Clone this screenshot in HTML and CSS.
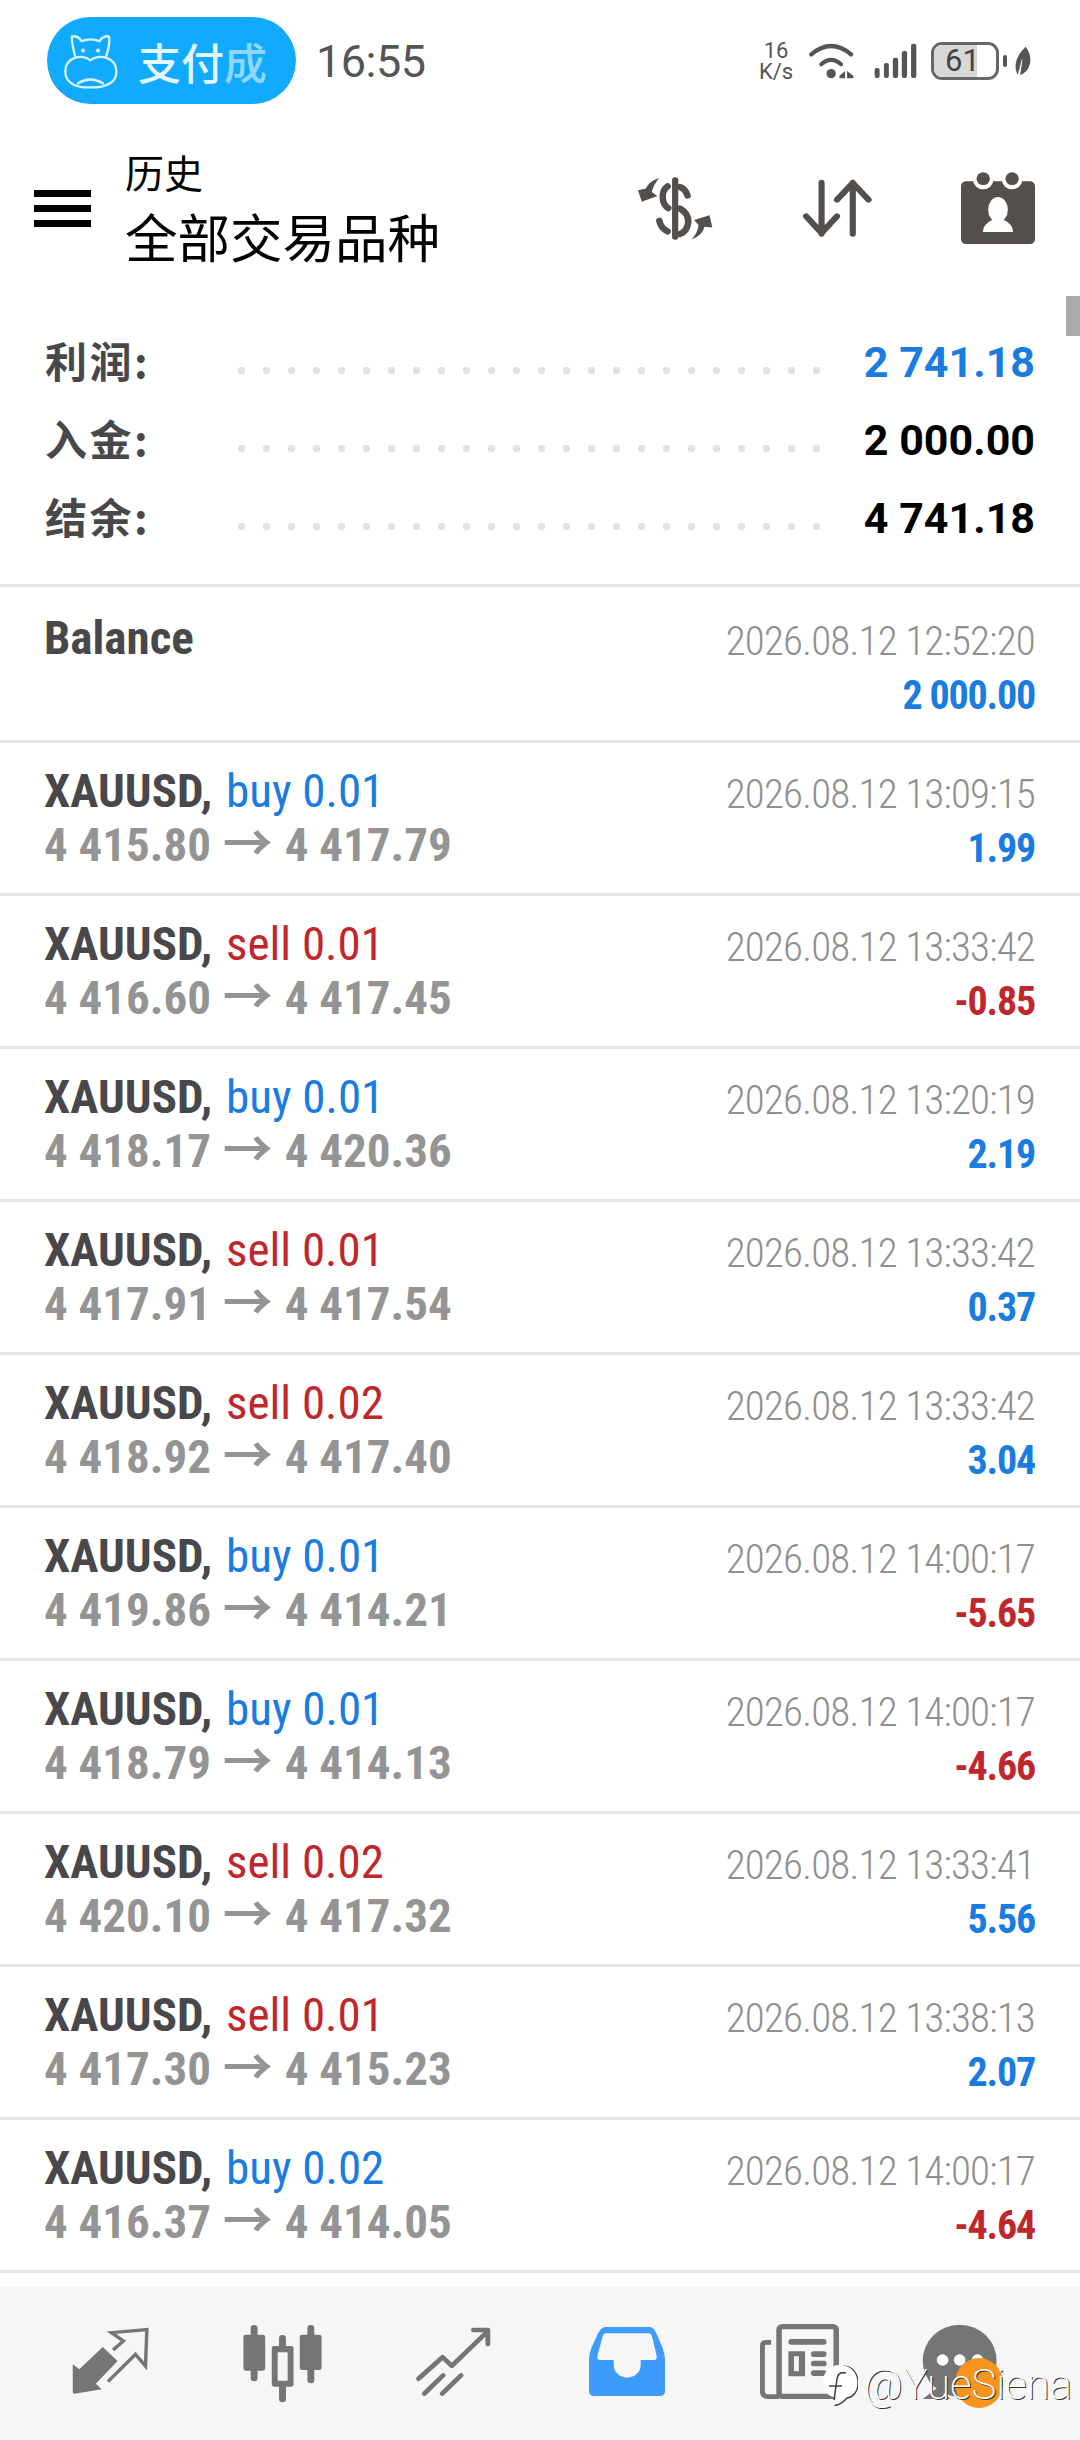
FILE: index.html
```html
<!DOCTYPE html>
<html>
  <head>
    <title>历史</title>
    <meta name="viewport" content="width=device-width, initial-scale=1.0">
    <link rel="stylesheet" href="styles.css">
  </head>
  <body>
    <div class="screen">
      <div class="status-bar">
        <div class="pill">
          <svg class="pill-icon" viewBox="180 98 165 167" preserveAspectRatio="none">
            <g fill="none" stroke="#d8f3ff" stroke-width="7" stroke-linejoin="round" stroke-linecap="round">
              <path d="M216 166Q205 125 207 108Q225 106 236 122Q262 112 290 122Q300 106 318 108Q322 130 310 166"/>
              <path d="M262 180C240 158 185 170 187 215C188 250 225 262 262 260C300 262 340 250 340 215C342 170 285 158 262 180Z"/>
              <path d="M225 248Q262 225 300 248"/>
            </g>
            <circle cx="240" cy="150" r="6" fill="#d8f3ff"/>
            <circle cx="285" cy="150" r="6" fill="#d8f3ff"/>
          </svg>
          <span class="pill-text">支付<span class="pill-fade">成</span></span>
        </div>
        <span class="clock">16:55</span>
        <div class="status-icons">
          <div class="speed"><span>16</span><span>K/s</span></div>
          <svg class="wifi" viewBox="778 128 136 108" preserveAspectRatio="none">
            <g fill="none" stroke="#555" stroke-linecap="round">
              <path d="M785 162Q845 112 905 162" stroke-width="13"/>
              <path d="M815 192Q845 165 875 192" stroke-width="12"/>
            </g>
            <circle cx="845" cy="220" r="14" fill="#555"/>
            <path d="M870 226L887 212V234H870ZM893 212L912 226V234H893Z" fill="#555"/>
          </svg>
          <svg class="signal" viewBox="968 128 130 108" preserveAspectRatio="none">
            <g fill="#555">
              <rect x="970" y="203" width="15" height="30" rx="6"/>
              <rect x="998" y="188" width="15" height="45" rx="6"/>
              <rect x="1025" y="172" width="16" height="61" rx="6"/>
              <rect x="1052" y="152" width="16" height="81" rx="6"/>
              <rect x="1080" y="130" width="16" height="103" rx="6"/>
            </g>
          </svg>
          <div class="battery"><span class="battery-fill"></span><span class="battery-num">61</span></div>
          <span class="battery-tip"></span>
          <svg class="leaf" viewBox="1370 135 60 90" preserveAspectRatio="none">
            <path d="M1410 137C1385 160 1368 190 1385 222C1392 200 1395 180 1400 170C1398 190 1396 205 1392 222C1420 215 1440 175 1410 137Z" fill="#555"/>
          </svg>
        </div>
      </div>

      <div class="header">
        <div class="burger"><span></span><span></span><span></span></div>
        <div class="titles">
          <div class="title-small">历史</div>
          <div class="title-big">全部交易品种</div>
        </div>
        <div class="actions">
          <svg class="act-money" viewBox="282 530 218 190" preserveAspectRatio="none">
            <g fill="#544e4c">
              <rect x="381" y="531" width="18" height="188" rx="8"/>
              <path d="M344 533C322 540 310 552 305 565L282 570L293 605L338 587L322 575C326 560 333 545 344 533Z"/>
              <path d="M438 718C460 710 472 695 475 680L498 682L490 645L445 660L458 675C456 690 450 705 438 718Z"/>
            </g>
            <g fill="none" stroke="#544e4c" stroke-width="19" stroke-linecap="round">
              <path d="M368 558Q352 570 354 595Q356 615 370 624"/>
              <path d="M404 560Q420 566 426 586"/>
              <path d="M404 625Q430 640 428 668Q424 695 404 702"/>
              <path d="M344 662Q348 684 368 694"/>
            </g>
          </svg>
          <svg class="act-sort" viewBox="755 535 210 180" preserveAspectRatio="none">
            <g fill="none" stroke="#544e4c" stroke-width="18" stroke-linecap="round" stroke-linejoin="round">
              <path d="M815 549V702M770 650L815 700L860 650"/>
              <path d="M906 702V549M860 600L906 550L952 600"/>
            </g>
          </svg>
          <svg class="act-cal" viewBox="1222 512 210 216" preserveAspectRatio="none">
            <rect x="1222" y="540" width="210" height="188" rx="14" fill="#544e4c"/>
            <circle cx="1285" cy="535" r="29" fill="#fff"/>
            <circle cx="1367" cy="535" r="29" fill="#fff"/>
            <circle cx="1285" cy="532" r="19" fill="#544e4c"/>
            <circle cx="1367" cy="532" r="19" fill="#544e4c"/>
            <ellipse cx="1327" cy="625" rx="28" ry="38" fill="#fff"/>
            <path d="M1284 692Q1284 668 1312 655H1342Q1370 668 1370 692Z" fill="#fff"/>
          </svg>
        </div>
      </div>

      <div class="summary">
        <div class="sum-row"><span class="sum-label">利润:</span><span class="sum-dots"></span><span class="sum-value blue">2 741.18</span></div>
        <div class="sum-row"><span class="sum-label">入金:</span><span class="sum-dots"></span><span class="sum-value">2 000.00</span></div>
        <div class="sum-row"><span class="sum-label">结余:</span><span class="sum-dots"></span><span class="sum-value">4 741.18</span></div>
      </div>

      <div class="list">
        <div class="row row-first">
          <div class="row-left"><div class="line"><b>Balance</b></div></div>
          <div class="row-right"><div class="date">2026.08.12 12:52:20</div><div class="amount blue">2 000.00</div></div>
        </div>
        <div class="row">
          <div class="row-left"><div class="line"><b>XAUUSD,</b> <span class="blue">buy 0.01</span></div><div class="line prices">4 415.80 <span class="arrow">→</span> 4 417.79</div></div>
          <div class="row-right"><div class="date">2026.08.12 13:09:15</div><div class="amount blue">1.99</div></div>
        </div>
        <div class="row">
          <div class="row-left"><div class="line"><b>XAUUSD,</b> <span class="red">sell 0.01</span></div><div class="line prices">4 416.60 <span class="arrow">→</span> 4 417.45</div></div>
          <div class="row-right"><div class="date">2026.08.12 13:33:42</div><div class="amount red">-0.85</div></div>
        </div>
        <div class="row">
          <div class="row-left"><div class="line"><b>XAUUSD,</b> <span class="blue">buy 0.01</span></div><div class="line prices">4 418.17 <span class="arrow">→</span> 4 420.36</div></div>
          <div class="row-right"><div class="date">2026.08.12 13:20:19</div><div class="amount blue">2.19</div></div>
        </div>
        <div class="row">
          <div class="row-left"><div class="line"><b>XAUUSD,</b> <span class="red">sell 0.01</span></div><div class="line prices">4 417.91 <span class="arrow">→</span> 4 417.54</div></div>
          <div class="row-right"><div class="date">2026.08.12 13:33:42</div><div class="amount blue">0.37</div></div>
        </div>
        <div class="row">
          <div class="row-left"><div class="line"><b>XAUUSD,</b> <span class="red">sell 0.02</span></div><div class="line prices">4 418.92 <span class="arrow">→</span> 4 417.40</div></div>
          <div class="row-right"><div class="date">2026.08.12 13:33:42</div><div class="amount blue">3.04</div></div>
        </div>
        <div class="row">
          <div class="row-left"><div class="line"><b>XAUUSD,</b> <span class="blue">buy 0.01</span></div><div class="line prices">4 419.86 <span class="arrow">→</span> 4 414.21</div></div>
          <div class="row-right"><div class="date">2026.08.12 14:00:17</div><div class="amount red">-5.65</div></div>
        </div>
        <div class="row">
          <div class="row-left"><div class="line"><b>XAUUSD,</b> <span class="blue">buy 0.01</span></div><div class="line prices">4 418.79 <span class="arrow">→</span> 4 414.13</div></div>
          <div class="row-right"><div class="date">2026.08.12 14:00:17</div><div class="amount red">-4.66</div></div>
        </div>
        <div class="row">
          <div class="row-left"><div class="line"><b>XAUUSD,</b> <span class="red">sell 0.02</span></div><div class="line prices">4 420.10 <span class="arrow">→</span> 4 417.32</div></div>
          <div class="row-right"><div class="date">2026.08.12 13:33:41</div><div class="amount blue">5.56</div></div>
        </div>
        <div class="row">
          <div class="row-left"><div class="line"><b>XAUUSD,</b> <span class="red">sell 0.01</span></div><div class="line prices">4 417.30 <span class="arrow">→</span> 4 415.23</div></div>
          <div class="row-right"><div class="date">2026.08.12 13:38:13</div><div class="amount blue">2.07</div></div>
        </div>
        <div class="row">
          <div class="row-left"><div class="line"><b>XAUUSD,</b> <span class="blue">buy 0.02</span></div><div class="line prices">4 416.37 <span class="arrow">→</span> 4 414.05</div></div>
          <div class="row-right"><div class="date">2026.08.12 14:00:17</div><div class="amount red">-4.64</div></div>
        </div>
      </div>

      <div class="nav">
        <svg class="nav-quotes" viewBox="205 205 235 210" preserveAspectRatio="none">
          <path d="M213 320L232 335L300 268L343 310L280 378L297 395L218 408Q213 408 213 403Z" fill="#757575"/>
          <path d="M330 277L360 250L325 225L428 216L424 325L395 290L315 372" fill="none" stroke="#757575" stroke-width="10"/>
        </svg>
        <svg class="nav-candles" viewBox="700 190 240 240" preserveAspectRatio="none">
          <g fill="none" stroke="#757575" stroke-width="20" stroke-linecap="round">
            <path d="M738 203V352M820 233V415M902 203V358"/>
          </g>
          <rect x="707" y="222" width="63" height="108" rx="7" fill="#757575"/>
          <rect x="789" y="256" width="63" height="122" rx="7" fill="#757575"/>
          <rect x="806" y="275" width="29" height="85" rx="3" fill="#f6f6f6"/>
          <rect x="870" y="222" width="63" height="106" rx="7" fill="#757575"/>
        </svg>
        <svg class="nav-chart" viewBox="1205 195 230 220" preserveAspectRatio="none">
          <g fill="none" stroke="#757575" stroke-width="14" stroke-linecap="round" stroke-linejoin="round">
            <path d="M1218 357L1288 292L1315 318L1412 222"/>
            <path d="M1378 210H1420V252"/>
            <path d="M1235 402L1290 347M1287 402L1342 347"/>
          </g>
        </svg>
        <svg class="nav-inbox" viewBox="143 203 219 207" preserveAspectRatio="none">
          <path d="M190 203H318Q330 203 338 225L355 265Q362 285 362 300V395Q362 410 347 410H158Q143 410 143 395V300Q143 285 150 265L168 225Q178 203 190 203Z" fill="#3f9bfa"/>
          <path d="M192 222H314Q322 222 325 232L338 290Q340 302 330 302H292V316A38 38 0 0 1 214 316V302H175Q165 302 167 290L182 232Q185 222 192 222Z" fill="#f6f6f6"/>
        </svg>
        <svg class="nav-news" viewBox="640 193 228 225" preserveAspectRatio="none">
          <rect x="695" y="201" width="165" height="209" rx="9" fill="none" stroke="#757575" stroke-width="16"/>
          <path d="M672 248H658Q647 248 647 258V395Q647 411 663 411H695" fill="none" stroke="#757575" stroke-width="14"/>
          <g fill="#757575">
            <rect x="722" y="238" width="110" height="17" rx="8"/>
            <path d="M722 275H770V350H722ZM738 290V335H752V290Z" fill-rule="evenodd"/>
            <rect x="787" y="275" width="45" height="17" rx="8"/>
            <rect x="787" y="303" width="45" height="17" rx="8"/>
            <rect x="787" y="332" width="45" height="17" rx="8"/>
          </g>
        </svg>
        <div class="nav-chat">
          <svg class="chat-icon" viewBox="1108 190 222 228" preserveAspectRatio="none">
            <circle cx="1218" cy="300" r="108" fill="#757575"/>
            <path d="M1155 380L1110 415H1190Z" fill="#757575"/>
            <g fill="#fff">
              <circle cx="1168" cy="298" r="17"/>
              <circle cx="1218" cy="298" r="17"/>
              <circle cx="1270" cy="298" r="17"/>
            </g>
          </svg>
          <span class="chat-badge"></span>
        </div>
      </div>

      <div class="scroll-thumb"></div>

      <div class="watermark">
        <svg class="mark-logo" viewBox="0 0 36 42">
          <path d="M20 2C31 2 36 10 36 19C36 28 31 33 25 34Q21 39 13 42Q16 38 16 35" fill="none" stroke="#444" stroke-width="1.4"/>
          <path d="M18 1C29 1 35 9 35 18C35 27 30 32 24 33Q20 38 12 41Q15 37 15 34C6 33 1 27 1 18C1 9 7 1 18 1Z" fill="#fff"/>
          <path d="M24 9Q16 7 15 15L12 36M7 22H20" fill="none" stroke="#444" stroke-width="1.6"/>
        </svg>
        <span class="mark-text">@YueSiena</span>
      </div>
    </div>
  </body>
</html>
```

FILE: styles.css
```css
* {
  box-sizing: border-box;
}
body {
  margin: 0;
  background-color: #fff;
  font-family: Roboto, "Noto Sans CJK SC", sans-serif;
}
.screen {
  position: relative;
  width: 1080px;
  height: 2440px;
  overflow: hidden;
}
.blue {
  color: #1a7be0;
}
.red {
  color: #c0272d;
}

/* status bar */
.status-bar {
  display: flex;
  align-items: center;
  height: 121px;
  padding: 0 48px 0 47px;
}
.pill {
  display: flex;
  align-items: center;
  width: 249px;
  height: 87px;
  padding-left: 16px;
  border-radius: 44px;
  background-color: #12aaff;
}
.pill-icon {
  width: 55px;
  height: 56px;
}
.pill-text {
  margin-left: 20px;
  font-size: 43px;
  font-weight: 500;
  color: #e4f6ff;
  font-family: "Noto Sans CJK SC", sans-serif;
}
.pill-fade {
  color: #8fd8fb;
}
.clock {
  margin: 2px 0 0 20px;
  font-size: 45px;
  letter-spacing: -0.5px;
  color: #555;
}
.status-icons {
  display: flex;
  align-items: center;
  margin-left: auto;
}
.speed {
  display: flex;
  flex-direction: column;
  align-items: center;
  width: 34px;
  font-size: 22px;
  line-height: 21px;
  color: #555;
}
.wifi {
  width: 45px;
  height: 36px;
  margin-left: 16px;
}
.signal {
  width: 43px;
  height: 36px;
  margin-left: 20px;
}
.battery {
  position: relative;
  display: flex;
  align-items: center;
  justify-content: center;
  width: 68px;
  height: 38px;
  margin-left: 14px;
  border: 3px solid #666;
  border-radius: 11px;
  overflow: hidden;
}
.battery-fill {
  position: absolute;
  left: 0;
  top: 0;
  bottom: 0;
  width: 43px;
  background-color: #d8d8d8;
}
.battery-num {
  position: relative;
  width: 100%;
  padding-right: 5px;
  text-align: center;
  font-size: 31px;
  line-height: 32px;
  color: #444;
}
.battery-tip {
  width: 4px;
  height: 12px;
  margin-left: 4px;
  border-radius: 2px;
  background-color: #555;
}
.leaf {
  width: 19px;
  height: 30px;
  margin-left: 6px;
}

/* title bar */
.header {
  display: flex;
  align-items: center;
  height: 172px;
  padding: 0 45px 0 34px;
}
.burger {
  display: flex;
  flex-direction: column;
  gap: 8px;
  width: 57px;
  margin-top: 3px;
}
.burger span {
  height: 7px;
  background-color: #000;
}
.titles {
  margin-left: 34px;
  padding-bottom: 6px;
  font-family: "Noto Sans CJK SC", sans-serif;
  color: #000;
}
.title-small {
  font-size: 39px;
  line-height: 62px;
}
.title-big {
  font-size: 52.5px;
  line-height: 66px;
}
.actions {
  display: flex;
  align-items: center;
  gap: 88px;
  margin-left: auto;
  margin-top: 2px;
}
.act-money {
  width: 75px;
  height: 63px;
}
.act-sort {
  width: 72px;
  height: 60px;
}
.act-cal {
  width: 74px;
  height: 72px;
}

/* totals */
.summary {
  padding: 30px 45px 27px 45px;
  border-bottom: 3px solid #e5e5e5;
}
.sum-row {
  display: flex;
  align-items: center;
  height: 78px;
}
.sum-label {
  width: 184px;
  padding-bottom: 6px;
  font-size: 42px;
  font-weight: 700;
  letter-spacing: 2.5px;
  color: #48484a;
  font-family: "Noto Sans CJK SC", sans-serif;
}
.sum-dots {
  width: 600px;
  height: 9px;
  margin-top: 16px;
  background-image: radial-gradient(circle, #e2e2e2 3.5px, transparent 4px);
  background-size: 25px 9px;
}
.sum-value {
  margin-left: auto;
  font-size: 43px;
  font-weight: 700;
  color: #000;
}
.sum-value.blue {
  color: #1a7be0;
}

/* history rows */
.row {
  display: flex;
  justify-content: space-between;
  height: 153px;
  padding: 0 45px 0 44px;
  border-bottom: 3px solid #e5e5e5;
  font-stretch: 75%;
}
.row-first {
  height: 156px;
  padding-top: 3px;
}
.row-left {
  padding-top: 21px;
}
.line {
  font-size: 47px;
  line-height: 54px;
  color: #48484a;
  white-space: nowrap;
}
.line b {
  margin-right: 3px;
  font-weight: 700;
}
.prices {
  font-weight: 700;
  color: #949494;
}
.arrow {
  margin: 0 1px;
  font-size: 50px;
  line-height: 40px;
}
.row-right {
  padding-top: 24px;
  text-align: right;
}
.date {
  font-size: 41px;
  line-height: 54px;
  font-weight: 350;
  letter-spacing: -0.8px;
  color: #8f8f8f;
}
.amount {
  margin-top: 1px;
  font-size: 40px;
  line-height: 54px;
  font-weight: 700;
  letter-spacing: -1.2px;
}

/* bottom tabs */
.nav {
  display: flex;
  align-items: flex-start;
  gap: 90px;
  height: 153px;
  margin-top: 14px;
  padding: 37px 0 0 70px;
  background-color: #f6f6f6;
}
.nav-quotes {
  width: 81px;
  height: 70px;
  margin-top: 2px;
}
.nav-candles {
  width: 83px;
  height: 80px;
}
.nav-chart {
  width: 79px;
  height: 73px;
  margin-top: 1px;
}
.nav-inbox {
  width: 76px;
  height: 69px;
  margin-top: 3px;
  margin-left: 6px;
}
.nav-news {
  width: 79px;
  height: 75px;
  margin-left: 5px;
}
.nav-chat {
  position: relative;
  width: 76px;
  height: 76px;
  margin-left: -7px;
}
.chat-icon {
  display: block;
  width: 76px;
  height: 76px;
}
.chat-badge {
  position: absolute;
  left: 33px;
  top: 34px;
  width: 48px;
  height: 50px;
  border-radius: 50%;
  background-color: #f7941d;
}

/* overlays */
.scroll-thumb {
  position: absolute;
  right: 0;
  top: 296px;
  width: 14px;
  height: 40px;
  background-color: #aaa;
}
.watermark {
  position: absolute;
  left: 822px;
  top: 2360px;
  display: flex;
  align-items: center;
}
.mark-logo {
  width: 36px;
  height: 42px;
}
.mark-text {
  margin-left: 6px;
  font-size: 42px;
  font-weight: 200;
  color: #fff;
  text-shadow: 1px 1px 0 #333;
}
```
